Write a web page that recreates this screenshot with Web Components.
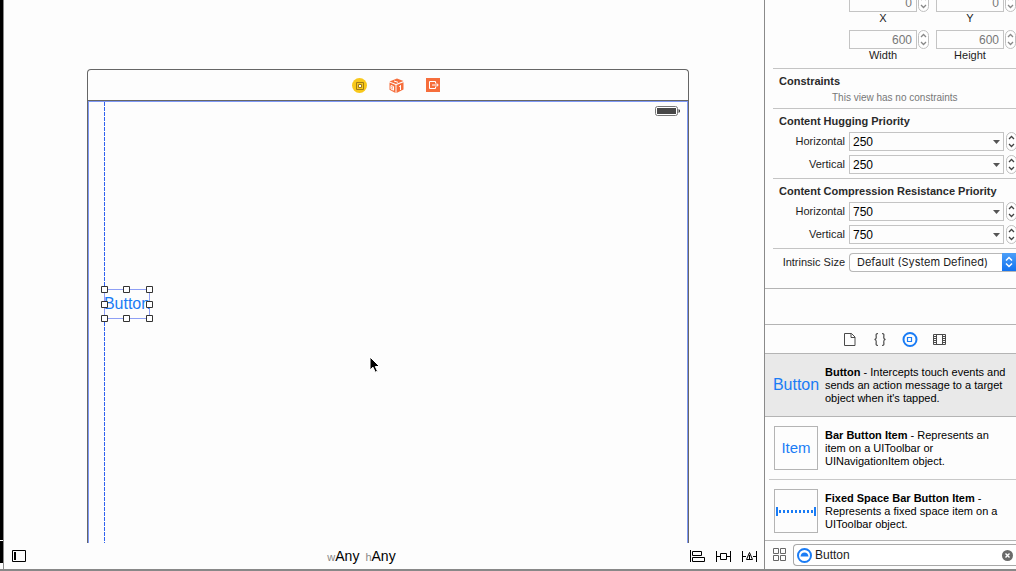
<!DOCTYPE html>
<html lang="en">
<head>
<meta charset="utf-8">
<title>Interface Builder</title>
<style>
html, body { height: 100%; margin: 0; }
body { background: #fdfdfd; color: #1c1c1c; font: 11px/13px "Liberation Sans", Arial, sans-serif; overflow: hidden; }
</style>
</head>
<body>
<ib-window></ib-window>

<script>
const define = (name, html, setup) => customElements.define(name, class extends HTMLElement {
  constructor() {
    super();
    const root = this.attachShadow({ mode: 'open' });
    root.innerHTML = html;
    if (setup) setup.call(this, root);
  }
});

/* Up/down stepper */
define('ib-stepper', `
<style>
:host { display: block; flex: none; width: 11px; height: 19px; }
button { display: block; width: 11px; height: 19px; padding: 0; border: 1px solid #c0c0c0; border-radius: 6px; background: #fff; }
svg { display: block; width: 9px; height: 17px; fill: none; stroke: #444; stroke-width: 1.3; }
:host([dim]) svg { stroke: #888; }
</style>
<button type="button" aria-label="Step value"><svg viewBox="0 0 9 17"><path d="M2 6 4.500 3.500 7 6M2 11 4.500 13.500 7 11"/></svg></button>`);

/* Number box with its stepper and a caption below */
define('ib-number', `
<style>
:host { display: block; width: 80px; }
.row { display: flex; gap: 1px; }
input { box-sizing: border-box; width: 68px; height: 19px; margin: 0; padding: 0 4px; border: 1px solid #c4c4c4; border-radius: 0; background: #fdfdfd; color: #777; font: 12px "Liberation Sans", Arial, sans-serif; text-align: right; }
label { display: block; width: 68px; height: 13px; padding-bottom: 5px; text-align: center; }
</style>
<div class="row"><input id="n" type="text"><ib-stepper dim></ib-stepper></div>
<label for="n"><slot></slot></label>`, function (root) {
  root.querySelector('input').value = this.getAttribute('value');
});

/* Priority row: label, drop-down, stepper */
define('ib-priority', `
<style>
:host { display: flex; align-items: center; height: 19px; margin-right: -1px; }
label { width: 72px; padding-right: 4px; text-align: right; }
.box { position: relative; flex: 1; }
select { display: block; box-sizing: border-box; width: 100%; height: 19px; margin: 0; padding: 0 3px; appearance: none; border: 1px solid #c4c4c4; border-radius: 0; background: #fdfdfd; color: #000; font: 12px "Liberation Sans", Arial, sans-serif; }
.box svg { position: absolute; right: 4px; top: 8px; width: 7px; height: 4px; fill: #555; pointer-events: none; }
ib-stepper { margin-left: 2px; }
</style>
<label for="s"><slot></slot></label>
<div class="box"><select id="s"><option></option></select><svg viewBox="0 0 7 4"><path d="M0 0h7L3.500 4z"/></svg></div>
<ib-stepper></ib-stepper>`, function (root) {
  root.querySelector('option').textContent = this.getAttribute('value');
});

/* Block of inspector rows closed by a rule */
define('ib-section', `
<style>
:host { display: block; margin-left: 8px; border-bottom: 1px solid #c4c4c4; }
h2 { margin: 0; padding: 6px 0 4px 6px; font-size: 11px; line-height: 13px; font-weight: bold; color: #2a2a2a; }
.body { display: grid; gap: 4px; }
</style>
<h2></h2><div class="body"><slot></slot></div>`, function (root) {
  root.querySelector('h2').textContent = this.getAttribute('heading');
});

define('ib-inspector', `
<style>
:host { display: flex; flex-direction: column; justify-content: flex-end; height: 288px; overflow: hidden; }
.frame { flex: none; display: grid; grid-template-columns: 80px 80px; column-gap: 7px; margin-left: 8px; padding: 0 0 1px 76px; border-bottom: 1px solid #c4c4c4; }
ib-section { flex: none; }
.pad { padding-bottom: 4px; }
p { margin: 0; padding: 0 0 4px 59px; font-size: 10px; line-height: 12px; color: #777; }
.size { flex: none; display: flex; align-items: center; margin-left: 8px; padding: 4px 0 16px; }
.size label { width: 72px; padding-right: 4px; text-align: right; }
.pop { position: relative; flex: 1; }
select { display: block; box-sizing: border-box; width: 100%; height: 19px; margin: 0; padding: 0 0 2px 7px; appearance: none; border: 1px solid #b8b8b8; border-right: 0; border-radius: 4px 0 0 4px; background: #fff; color: #1c1c1c; font: 11px Inter, sans-serif; }
.pop svg { position: absolute; right: 0; top: 0; width: 14px; height: 18px; background: linear-gradient(#4c9ff8, #1272f0); fill: none; stroke: #fff; stroke-width: 1.5; pointer-events: none; }
</style>
<div class="frame">
  <ib-number value="0">X</ib-number><ib-number value="0">Y</ib-number>
  <ib-number value="600">Width</ib-number><ib-number value="600">Height</ib-number>
</div>
<ib-section heading="Constraints"><p>This view has no constraints</p></ib-section>
<ib-section heading="Content Hugging Priority"><ib-priority value="250">Horizontal</ib-priority><ib-priority class="pad" value="250">Vertical</ib-priority></ib-section>
<ib-section heading="Content Compression Resistance Priority"><ib-priority value="750">Horizontal</ib-priority><ib-priority class="pad" value="750">Vertical</ib-priority></ib-section>
<div class="size"><label for="i">Intrinsic Size</label><div class="pop"><select id="i"><option>Default (System Defined)</option></select><svg viewBox="0 0 14 18"><path d="M4 7.500 7 4.500 10 7.500M4 10.500 7 13.500 10 10.500"/></svg></div></div>`);

/* Library row: picture, bold name, description */
define('ib-entry', `
<style>
:host { display: flex; flex: none; box-sizing: border-box; height: 63px; padding: 0 6px 0 5px; margin-left: 4px; border-bottom: 1px solid #c8c8c8; align-items: center; gap: 7px; color: #000; }
:host([selected]) { margin-left: 0; padding-left: 9px; background: #e9e9e9; border-color: #b4b4b4; }
.pic { flex: none; box-sizing: border-box; width: 44px; height: 44px; display: flex; align-items: center; justify-content: center; border: 1px solid #b4b4b4; color: #1a7cf5; font-size: 15px; line-height: 18px; }
:host([selected]) .pic { border: 0; font-size: 16px; }
p { margin: 0; }
</style>
<div class="pic"><slot name="pic"></slot></div>
<p><b><slot name="name"></slot></b> - <slot></slot></p>`);

define('ib-library', `
<style>
:host { display: flex; flex-direction: column; flex: 1; min-height: 0; }
nav { display: flex; flex: none; justify-content: center; align-items: center; gap: 14px; height: 28px; padding-left: 8px; border-bottom: 1px solid #b4b4b4; }
nav button { padding: 0; border: 0; background: none; width: 16px; height: 16px; }
svg { display: block; overflow: visible; fill: none; }
.list { flex: 1; min-height: 0; overflow: hidden; }
.find { display: flex; flex: none; align-items: center; gap: 6px; height: 28px; padding-left: 8px; border-top: 1px solid #b4b4b4; }
.find > button { padding: 0; border: 0; background: none; }
.field { flex: 1; display: flex; align-items: center; box-sizing: border-box; height: 22px; padding: 0 3px; border: 1px solid #a8a8a8; border-right: 0; border-radius: 4px 0 0 4px; background: #fff; gap: 3px; }
.field button { padding: 0; border: 0; background: none; }
input { flex: 1; min-width: 0; height: 18px; margin: 0; padding: 0; border: 0; background: none; outline: 0; color: #1c1c1c; font: 12px "Liberation Sans", Arial, sans-serif; }
</style>
<nav aria-label="Library">
  <button type="button" aria-label="File templates"><svg width="16" height="16" stroke="#4a4a4a"><path d="M2.500 2.500h7l3.500 3.500v8.500h-10.500zM9 2.500v4h4"/></svg></button>
  <button type="button" aria-label="Code snippets"><svg width="16" height="16" stroke="#4a4a4a" stroke-width="1.200"><path d="M6 2.500C3 2.500 4.500 5 4.200 6.800Q4 8.300 2.500 8.500Q4 8.700 4.200 10.200C4.500 12 3 14.500 6 14.500M10 2.500C13 2.500 11.500 5 11.800 6.800Q12 8.300 13.500 8.500Q12 8.700 11.800 10.200C11.500 12 13 14.500 10 14.500"/></svg></button>
  <button type="button" aria-label="Objects"><svg width="16" height="16" stroke="#1a7cf5"><circle cx="8" cy="8.500" r="6.500" stroke-width="2"/><path d="M5.500 6.500h4v4h-4z" stroke-width="1.200"/></svg></button>
  <button type="button" aria-label="Media"><svg width="16" height="16" stroke="#4a4a4a"><path d="M1.500 3.500h12v10h-12zM4.500 3.500v10M10.500 3.500v10"/><path d="M3 5v8M12 5v8" stroke-dasharray="1 1" stroke-width="2"/></svg></button>
</nav>
<div class="list">
  <ib-entry selected><span slot="pic">Button</span><span slot="name">Button</span>Intercepts touch events and sends an action message to a target object when it's tapped.</ib-entry>
  <ib-entry><span slot="pic">Item</span><span slot="name">Bar Button Item</span>Represents an item on a UIToolbar or UINavigationItem object.</ib-entry>
  <ib-entry><svg slot="pic" width="40" height="9" stroke="#1a7cf5" stroke-width="2"><path d="M1 0v9M39 0v9"/><path d="M3 4.500h34" stroke-width="3" stroke-dasharray="2 2"/></svg><span slot="name">Fixed Space Bar Button Item</span>Represents a fixed space item on a UIToolbar object.</ib-entry>
</div>
<div class="find">
  <button type="button" aria-label="Icon view"><svg width="14" height="14" stroke="#666"><path d="M.5.5h5v5h-5zM7.500.5h5v5h-5zM.5 7.500h5v5h-5zM7.500 7.500h5v5h-5z"/></svg></button>
  <div class="field">
    <svg width="15" height="15"><circle cx="7.500" cy="7.500" r="6.500" stroke="#1a7cf5" stroke-width="2"/><path d="M3.500 8.500Q4 4.500 7.500 4.500T11.500 8.500z" fill="#1a7cf5"/></svg>
    <input type="text" aria-label="Filter objects" value="Button">
    <button type="button" aria-label="Clear"><svg width="11" height="11"><circle cx="5.500" cy="5.500" r="5.500" fill="#6a6a6a"/><path d="M3.500 3.500l4 4M7.500 3.500l-4 4" stroke="#fff" stroke-width="1.400"/></svg></button>
  </div>
</div>`);

/* View controller scene on the free canvas */
define('ib-scene', `
<style>
:host { display: flex; flex-direction: column; box-sizing: border-box; margin: 69px 75px 0 83px; border: 1px solid #666; border-bottom: 0; border-radius: 4px 4px 0 0; }
svg { display: block; }
.dock { display: flex; flex: none; justify-content: center; align-items: center; gap: 22px; height: 30px; padding-left: 16px; border-bottom: 1px solid #666; }
.view { position: relative; flex: 1; border: 1px solid #7e98f5; border-bottom: 0; }
.battery { position: absolute; right: 7px; top: 4px; }
.guide { position: absolute; left: 15px; top: 0; bottom: 0; width: 1px; background: repeating-linear-gradient(#2f62f0 0 4px, transparent 4px 5px); }
.sel { position: absolute; left: 15px; top: 187px; box-sizing: border-box; width: 46px; height: 30px; padding: 0; border: 1px solid #8e9ff5; background: none; color: #1a7cf5; font: 16px/28px "Liberation Sans", Arial, sans-serif; }
.sel span { display: flex; justify-content: center; }
.handles { position: absolute; left: -4px; top: -4px; }
.cursor { position: absolute; left: 280px; top: 254px; }
</style>
<div class="dock">
  <svg width="15" height="15"><circle cx="7.500" cy="7.500" r="7.500" fill="#f8c81c"/><path d="M4.500 4.500h7v7h-7z" fill="none" stroke="#a07c18"/><path d="M6.500 6.500h3v3h-3z" fill="#fff" stroke="#a07c18"/></svg>
  <svg width="15" height="15"><path d="M.5 3.500 8 .5 14.500 3 7 6z" fill="#f66e3c"/><path d="M.5 4.500 6.500 7v8L.5 11.800z" fill="#f66e3c"/><path d="M7.500 7 14.500 4.200V11.500L7.500 15z" fill="#f66e3c"/><path d="M2 7.500v3.500l2.500 1.200V8.500zM2.200 9.500l2 .8M11.500 7.200v4.800M10.200 8.700l1.300-.9M5 3l4 1.300" fill="none" stroke="#fff"/></svg>
  <svg width="14" height="14"><path d="M0 0h14v14H0z" fill="#f66e3c"/><path d="M9.500 5.500v-2h-6v7h6v-2M6 7h6M10.500 5.300 12.300 7 10.500 8.700" fill="none" stroke="#fff"/></svg>
</div>
<div class="view">
  <svg class="battery" width="25" height="10"><rect x=".5" y=".5" width="22" height="9" rx="2" fill="#fff" stroke="#777"/><path d="M2 2h19v6H2z" fill="#484848"/><path d="M23.500 3v4l1.500-1V4z" fill="#484848"/></svg>
  <div class="guide"></div>
  <button type="button" class="sel"><span>Button</span>
    <svg class="handles" width="52" height="37" fill="#fff" stroke="#333"><path d="M.5.5h6v6h-6zM22.500.5h6v6h-6zM45.500.5h6v6h-6zM.5 15.500h6v6h-6zM45.500 15.500h6v6h-6zM.5 29.500h6v6h-6zM22.500 29.500h6v6h-6zM45.500 29.500h6v6h-6z"/></svg>
  </button>
  <svg class="cursor" width="13" height="18"><path d="M1 1v13l3-2.800 2.200 5 2.300-1-2.200-4.700H10.500z" fill="#000" stroke="#fff" stroke-width="1"/></svg>
</div>`);

define('ib-statusbar', `
<style>
:host { display: grid; grid-template-columns: 1fr auto 1fr; align-items: center; height: 26px; padding: 0 7px 0 8px; color: #000; }
button { display: block; padding: 0; border: 0; background: none; color: inherit; font: 14px/16px "Liberation Sans", Arial, sans-serif; }
svg { display: block; fill: none; stroke: #000; }
.size { display: flex; gap: 6px; padding-right: 46px; }
.size span { font-size: 11px; color: #888; }
.tools { display: flex; justify-content: flex-end; gap: 11px; }
</style>
<button type="button" aria-label="Document outline"><svg width="14" height="12"><path d="M.5.5h13v11H.5z"/><path d="M3 2v8" stroke-width="2"/></svg></button>
<div class="size"><button type="button"><span>w</span>Any</button><button type="button"><span>h</span>Any</button></div>
<div class="tools">
  <button type="button" aria-label="Align"><svg width="15" height="12"><path d="M.5 0v12M2.500 1.500h9v4h-9zM2.500 7.500h12v4h-12z"/></svg></button>
  <button type="button" aria-label="Pin"><svg width="15" height="12"><path d="M.5 1v11M14.500 1v11M4.500 3.500h6v6h-6zM0 6.500h4M11 6.500h4"/></svg></button>
  <button type="button" aria-label="Resolve layout issues"><svg width="15" height="12"><path d="M.5 1v11M14.500 1v11M4.500 9.500 7.500 2.500 10.500 9.500zM0 6.500h4M11 6.500h4M7.500 5v4"/></svg></button>
</div>`);

define('ib-window', `
<style>
:host { display: grid; grid-template-columns: 3px minmax(0, 1fr) 251px; box-sizing: border-box; height: 100vh; border-bottom: 2px solid #888; }
.edge { height: 563px; max-height: 100%; background: linear-gradient(#000 540px, #fff 540px 541px, #000 541px); }
main { display: flex; flex-direction: column; min-width: 0; border: solid #8a8a8a; border-width: 0 1px; }
ib-scene { flex: 1; min-height: 0; }
ib-statusbar { flex: none; }
aside { display: flex; flex-direction: column; min-width: 0; overflow: hidden; }
ib-inspector { flex: none; }
.gap { flex: none; height: 35px; border: solid #b4b4b4; border-width: 1px 0; }
</style>
<div class="edge"></div>
<main><ib-scene></ib-scene><ib-statusbar></ib-statusbar></main>
<aside><ib-inspector></ib-inspector><div class="gap"></div><ib-library></ib-library></aside>`);
</script>
</body>
</html>
